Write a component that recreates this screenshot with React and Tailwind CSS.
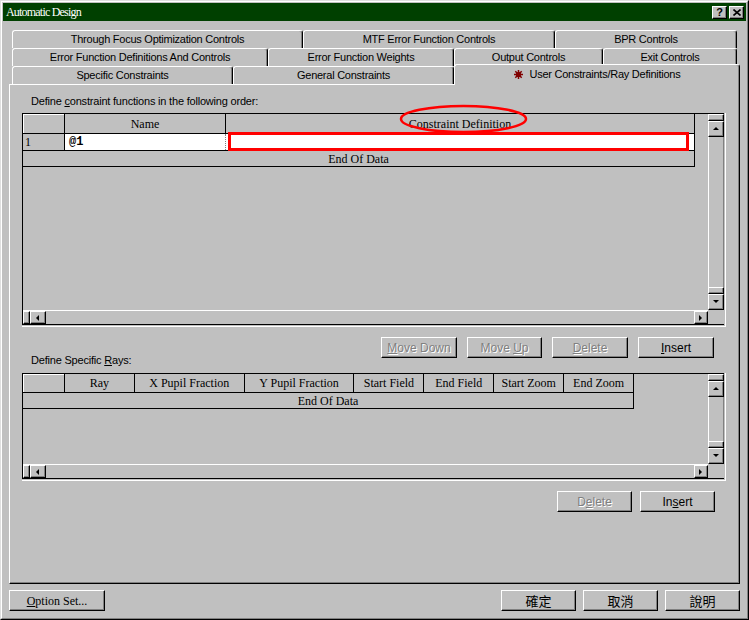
import React from 'react';

// raised 3D edge used for buttons, tabs bits and scroll arrows
const raised =
  'border border-t-white border-l-white border-r-black border-b-black shadow-[inset_-1px_-1px_0_#808080]';

const sans = "font-['Liberation_Sans',Arial,sans-serif]";
const serif = "font-['Liberation_Serif','Times_New_Roman',serif]";
const cjk = "font-['Noto_Sans_CJK_TC','Noto_Sans_CJK_SC',sans-serif]";

function Tab({ className, children }) {
  return (
    <div
      className={`h-full flex items-center justify-center border-t border-l border-white border-r border-r-black rounded-t-[3px] shadow-[inset_-1px_0_0_#808080] text-[11px] leading-[13px] tracking-[-0.25px] ${sans} ${className}`}
    >
      <span>{children}</span>
    </div>
  );
}

function Tri({ dir }) {
  const pts = {
    up: '1,5 4,2 7,5',
    down: '1,2 4,5 7,2',
    left: '5,1 2,4 5,7',
    right: '2,1 5,4 2,7',
  }[dir];
  return (
    <svg width="8" height="8" viewBox="0 0 8 8">
      <polygon points={pts} fill="#000" />
    </svg>
  );
}

function Arrow({ dir, className }) {
  return (
    <div className={`${raised} flex items-center justify-center ${className}`}>
      <Tri dir={dir} />
    </div>
  );
}

function VScroll() {
  return (
    <div className="w-[16px] flex flex-col">
      <div className={`h-[7px] ${raised}`} />
      <Arrow dir="up" className="h-[16px]" />
      <div className="flex-1 border-l border-white border-r border-r-[#808080]" />
      <div className={`h-[7px] ${raised}`} />
      <Arrow dir="down" className="h-[16px]" />
    </div>
  );
}

function HScroll() {
  return (
    <div className="h-[14px] flex">
      <div className="flex-1 flex border-t border-white">
        <div className={`w-[7px] ${raised}`} />
        <Arrow dir="left" className="w-[16px]" />
        <div className="flex-1" />
        <Arrow dir="right" className="w-[14px]" />
      </div>
      <div className="w-[16px]" />
    </div>
  );
}

function Button({ className, disabled, children }) {
  return (
    <div
      className={`${raised} h-[21px] flex items-center justify-center text-[12px] ${
        disabled ? 'text-[#808080] [text-shadow:1px_1px_0_#fff]' : 'text-black'
      } ${className}`}
    >
      <span>{children}</span>
    </div>
  );
}

function Hd({ className, children }) {
  return (
    <div className={`h-full flex items-center justify-center border-r border-black ${className}`}>
      {children}
    </div>
  );
}

export default function App() {
  return (
    <div className="w-[749px] h-[620px] bg-[#c0c0c0] text-black border-t border-l border-t-[#dfdfdf] border-l-[#dfdfdf] border-r border-b border-r-black border-b-black overflow-hidden">
      <div className="h-full flex flex-col border-t border-l border-white border-r border-b border-r-[#808080] border-b-[#808080] p-[1px]">
        {/* title bar */}
        <div className="h-[18px] bg-[#004000] flex items-center pl-[3px] pr-[2px]">
          <span className={`text-white text-[12px] tracking-[-0.8px] leading-[14px] ${serif}`}>Automatic Design</span>
          <div className="ml-auto flex gap-[2px]">
            <div className={`${raised} w-[15px] h-[13px] bg-[#c0c0c0] flex items-center justify-center text-[11px] font-bold leading-none ${sans}`}>?</div>
            <div className={`${raised} w-[15px] h-[13px] bg-[#c0c0c0] flex items-center justify-center`}>
              <svg width="8" height="7" viewBox="0 0 8 7">
                <path d="M0.5 0.5 L7.5 6.5 M7.5 0.5 L0.5 6.5" stroke="#000" strokeWidth="1.6" />
              </svg>
            </div>
          </div>
        </div>

        {/* tabs */}
        <div className="mt-[9px] ml-[9px] flex flex-col">
          <div className="h-[18px] flex">
            <Tab className="w-[291px]">Through Focus Optimization Controls</Tab>
            <Tab className="w-[252px]">MTF Error Function Controls</Tab>
            <Tab className="w-[182px]">BPR Controls</Tab>
          </div>
          <div className="h-[18px] flex">
            <Tab className="w-[256px]">Error Function Definitions And Controls</Tab>
            <Tab className="w-[186px]">Error Function Weights</Tab>
            <Tab className="w-[149px]">Output Controls</Tab>
            <Tab className="w-[134px]">Exit Controls</Tab>
          </div>
          <div className="h-[18px] flex">
            <Tab className="w-[221px]">Specific Constraints</Tab>
            <Tab className="w-[221px]">General Constraints</Tab>
            <div
              className={`relative z-10 w-[286px] h-[21px] -mt-[2px] bg-[#c0c0c0] flex items-start justify-center pt-[3px] gap-[7px] border-t border-l border-white border-r border-r-black rounded-t-[3px] shadow-[inset_-1px_0_0_#808080] text-[11px] leading-[13px] tracking-[-0.25px] ${sans}`}
            >
              <svg width="9" height="9" viewBox="0 0 9 9" className="mt-[2px]">
                <g stroke="#800000" strokeWidth="1.5">
                  <path d="M4.5 0 V9 M0 4.5 H9 M1.3 1.3 L7.7 7.7 M7.7 1.3 L1.3 7.7" />
                </g>
                <circle cx="4.5" cy="4.5" r="2.6" fill="#800000" />
              </svg>
              <span>User Constraints/Ray Definitions</span>
            </div>
          </div>
        </div>

        {/* panel */}
        <div className={`mx-[6px] h-[500px] flex flex-col ${raised} ${sans}`}>
          <div className="mt-[10px] pl-[21px] h-[13px] text-[11px] leading-[13px] tracking-[-0.2px]">
            Define <span className="underline">c</span>onstraint functions in the following order:
          </div>

          {/* constraint grid */}
          <div className="mt-[5px] ml-[12px] w-[704px] border-r border-b border-white pr-[1px] pb-[1px]">
            <div className="h-[212px] border-l border-t border-b border-black flex flex-col">
              <div className="flex-1 flex">
                <div className={`flex-1 flex flex-col text-[12px] ${serif}`}>
                  <div className="h-[20px] flex border-b border-black w-[672px]">
                    <Hd className="w-[42px] shadow-[inset_1px_1px_0_#fff]" />
                    <Hd className="w-[161px]">Name</Hd>
                    <Hd className="w-[469px] relative">
                      Constraint Definition
                      <svg
                        className="absolute left-[173px] top-[-10px]"
                        width="129"
                        height="30"
                        viewBox="0 0 129 30"
                      >
                        <ellipse cx="64.5" cy="15" rx="62.5" ry="13" fill="none" stroke="#ff0000" strokeWidth="2.5" />
                      </svg>
                    </Hd>
                  </div>
                  <div className="h-[17px] flex border-b border-black w-[672px]">
                    <div className="w-[42px] h-full border-r border-black pl-[2px] leading-[16px]">1</div>
                    <div className="w-[161px] h-full bg-white border-r border-dotted border-r-[#808080] pl-[4px] flex items-center">
                      <span className="font-['Liberation_Mono','Courier_New',monospace] font-bold text-[12px]">@1</span>
                    </div>
                    <div className="w-[469px] h-full bg-white border-r border-black relative">
                      <div className="absolute left-[2px] top-[-2px] w-[461px] h-[19px] border-[3px] border-[#ff0000]" />
                    </div>
                  </div>
                  <div className="h-[16px] w-[672px] flex items-center justify-center border-r border-b border-black leading-[14px]">
                    End Of Data
                  </div>
                </div>
                <VScroll />
              </div>
              <HScroll />
            </div>
          </div>

          {/* middle row: label + buttons */}
          <div className="h-[46px] flex justify-between pr-[25px]">
            <div className="self-end mb-[6px] pl-[21px] text-[11px] leading-[13px] tracking-[-0.2px]">
              Define Specific <span className="underline">R</span>ays:
            </div>
            <div className="mt-[10px] flex gap-[10px]">
              <Button disabled className="w-[76px]">
                <span className="underline">M</span>ove Down
              </Button>
              <Button disabled className="w-[75px]">
                Move <span className="underline">U</span>p
              </Button>
              <Button disabled className="w-[76px]">
                <span className="underline">D</span>elete
              </Button>
              <Button className="w-[76px]">
                <span className="underline">I</span>nsert
              </Button>
            </div>
          </div>

          {/* rays grid */}
          <div className="ml-[12px] w-[704px] border-r border-b border-white pr-[1px] pb-[1px]">
            <div className="h-[106px] border-l border-t border-b border-black flex flex-col">
              <div className="flex-1 flex">
                <div className={`flex-1 flex flex-col text-[12px] ${serif}`}>
                  <div className="h-[19px] w-[611px] flex border-b border-black">
                    <Hd className="w-[42px] shadow-[inset_1px_1px_0_#fff]" />
                    <Hd className="w-[70px]">Ray</Hd>
                    <Hd className="w-[110px]">X Pupil Fraction</Hd>
                    <Hd className="w-[110px]">Y Pupil Fraction</Hd>
                    <Hd className="w-[70px]">Start Field</Hd>
                    <Hd className="w-[70px]">End Field</Hd>
                    <Hd className="w-[70px]">Start Zoom</Hd>
                    <Hd className="w-[70px]">End Zoom</Hd>
                  </div>
                  <div className="h-[16px] w-[611px] flex items-center justify-center border-r border-b border-black leading-[14px]">
                    End Of Data
                  </div>
                </div>
                <VScroll />
              </div>
              <HScroll />
            </div>
          </div>

          <div className="mt-[10px] flex justify-end gap-[8px] pr-[24px]">
            <Button disabled className="w-[75px]">
              D<span className="underline">e</span>lete
            </Button>
            <Button className="w-[75px]">
              In<span className="underline">s</span>ert
            </Button>
          </div>
        </div>

        {/* bottom buttons */}
        <div className="mt-[6px] mx-[6px] flex">
          <Button className={`w-[96px] ${serif}`}>
            <span className="underline">O</span>ption Set...
          </Button>
          <div className="ml-auto flex gap-[7px]">
            <Button className={`w-[75px] text-[13px] ${cjk}`}>確定</Button>
            <Button className={`w-[75px] text-[13px] ${cjk}`}>取消</Button>
            <Button className={`w-[75px] text-[13px] ${cjk}`}>說明</Button>
          </div>
        </div>
      </div>
    </div>
  );
}
